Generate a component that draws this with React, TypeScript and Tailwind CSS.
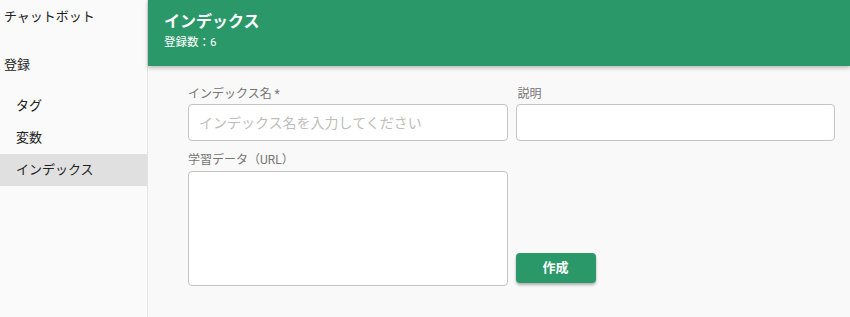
const font = { fontFamily: 'Roboto, "Noto Sans CJK JP", sans-serif' };

const navItems = ["タグ", "変数", "インデックス"];

export default function App() {
  return (
    <div className="flex h-[317px] w-[850px] overflow-hidden bg-[#f9f9f9] text-[#212121]" style={font}>
      <aside className="w-[148px] shrink-0 border-r border-[#e3e3e3] bg-[#fafafa] text-[13px]">
        <div className="flex h-[34px] items-center px-1">チャットボット</div>
        <div className="mt-[15px] flex h-[32px] items-center px-1">登録</div>
        <ul className="mt-[9px]">
          {navItems.map((item) => (
            <li
              key={item}
              className={`flex h-[32px] items-center pl-4 ${item === "インデックス" ? "bg-[#e0e0e0]" : ""}`}
            >
              {item}
            </li>
          ))}
        </ul>
      </aside>

      <main className="flex-1">
        <header className="h-[66px] bg-[#2a9868] px-4 pt-[10px] text-white shadow-[0_2px_4px_rgba(0,0,0,0.25)]">
          <h1 className="text-[16px] font-bold leading-6">インデックス</h1>
          <p className="text-[11.5px] leading-4">登録数：6</p>
        </header>

        <form className="grid grid-cols-2 gap-x-2 pl-10 pr-[15px] pt-5">
          <div>
            <label className="block text-[12px] leading-4 text-[#757575]">インデックス名 *</label>
            <input
              className="mt-[2px] h-[37px] w-full rounded-[4px] border border-[#c4c4c4] bg-white px-[10px] text-[14px] outline-none placeholder:text-[#bdbdbd]"
              placeholder="インデックス名を入力してください"
            />
          </div>
          <div>
            <label className="block pl-[2px] text-[12px] leading-4 text-[#757575]">説明</label>
            <input className="mt-[2px] h-[37px] w-full rounded-[4px] border border-[#c4c4c4] bg-white px-[10px] text-[14px] outline-none" />
          </div>

          <div className="mt-[11px]">
            <label className="block text-[12px] leading-4 text-[#757575]">学習データ（URL）</label>
            <textarea className="mt-[3px] block h-[115px] w-full resize-none rounded-[4px] border border-[#c4c4c4] bg-white outline-none" />
          </div>
          <div className="flex items-end pb-[3px]">
            <button
              type="button"
              className="h-[30px] w-[80px] rounded-[4px] bg-[#2a9868] text-[13px] font-bold text-white shadow-[0_2px_3px_rgba(0,0,0,0.3)]"
            >
              作成
            </button>
          </div>
        </form>
      </main>
    </div>
  );
}
